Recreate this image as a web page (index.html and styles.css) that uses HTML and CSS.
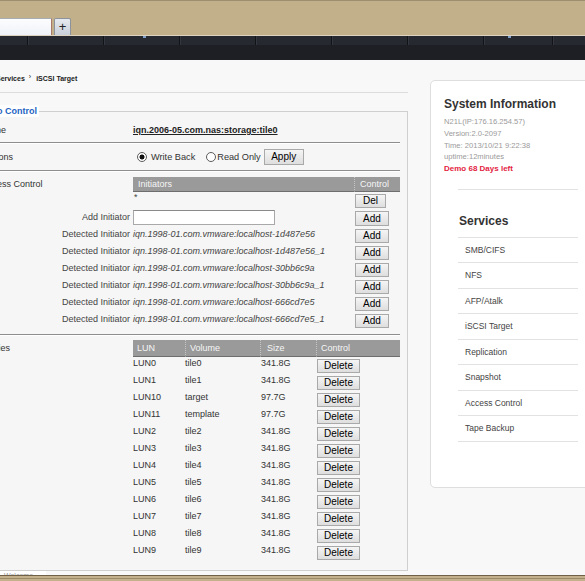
FILE: index.html
```html
<!DOCTYPE html>
<html>
<head>
<meta charset="utf-8">
<title>iSCSI Target</title>
<link rel="stylesheet" href="styles.css">
</head>
<body>
<div class="browser-top">
  <div class="tabstrip">
    <div class="tab"></div>
    <div class="newtab">+</div>
  </div>
  <div class="nav">
    <div class="nav-items">
      <span class="nav-item first"></span>
      <span class="nav-item"></span>
      <span class="nav-item"></span>
      <span class="nav-item"></span>
      <span class="nav-item"></span>
      <span class="nav-item"></span>
      <span class="nav-item"></span>
      <span class="nav-item short"></span>
      <span class="nav-item last"></span>
    </div>
    <div class="nav-bottom"></div>
    <span class="dot dot-a"></span>
    <span class="dot dot-b"></span>
  </div>
</div>

<div class="viewport">
  <div class="page">
    <main class="main">
      <div class="breadcrumb">Services<span class="crumb-sep">&rsaquo;</span>iSCSI Target</div>

      <fieldset class="box">
        <legend class="box-legend">Info Control</legend>

        <div class="field-row name-row">
          <div class="field-label">Name</div>
          <div class="target-name">iqn.2006-05.com.nas:storage:tile0</div>
        </div>
        <div class="sep"></div>

        <div class="field-row opt-row">
          <div class="field-label">Options</div>
          <div class="opt-value">
            <input type="radio" name="cache" class="radio first-radio" checked>
            <span class="radio-label">Write Back</span>
            <input type="radio" name="cache" class="radio second-radio">
            <span class="radio-label second-label">Read Only</span>
            <button class="btn apply-btn">Apply</button>
          </div>
        </div>
        <div class="sep"></div>

        <div class="access">
          <div class="field-label">Access Control</div>
          <div class="th th-init">Initiators</div>
          <div class="th th-ctrl">Control</div>

          <div></div>
          <div class="star">*</div>
          <div><button class="btn del-btn">Del</button></div>

          <div class="sub-label">Add Initiator</div>
          <div><input type="text" class="init-input"></div>
          <div><button class="btn add-btn add-first">Add</button></div>

          <div class="sub-label">Detected Initiator</div>
          <div class="iqn">iqn.1998-01.com.vmware:localhost-1d487e56</div>
          <div><button class="btn add-btn">Add</button></div>

          <div class="sub-label">Detected Initiator</div>
          <div class="iqn">iqn.1998-01.com.vmware:localhost-1d487e56_1</div>
          <div><button class="btn add-btn">Add</button></div>

          <div class="sub-label">Detected Initiator</div>
          <div class="iqn">iqn.1998-01.com.vmware:localhost-30bb6c9a</div>
          <div><button class="btn add-btn">Add</button></div>

          <div class="sub-label">Detected Initiator</div>
          <div class="iqn">iqn.1998-01.com.vmware:localhost-30bb6c9a_1</div>
          <div><button class="btn add-btn">Add</button></div>

          <div class="sub-label">Detected Initiator</div>
          <div class="iqn">iqn.1998-01.com.vmware:localhost-666cd7e5</div>
          <div><button class="btn add-btn">Add</button></div>

          <div class="sub-label">Detected Initiator</div>
          <div class="iqn">iqn.1998-01.com.vmware:localhost-666cd7e5_1</div>
          <div><button class="btn add-btn">Add</button></div>
        </div>
        <div class="sep sep-lun"></div>

        <div class="luns">
          <div class="field-label lun-label">Entries</div>
          <div class="th th-lun">LUN</div>
          <div class="th th-vol">Volume</div>
          <div class="th th-size">Size</div>
          <div class="th th-lctrl">Control</div>

          <div></div><div class="td td-lun">LUN0</div><div class="td td-vol">tile0</div><div class="td td-size">341.8G</div><div><button class="btn delete-btn">Delete</button></div>
          <div></div><div class="td td-lun">LUN1</div><div class="td td-vol">tile1</div><div class="td td-size">341.8G</div><div><button class="btn delete-btn">Delete</button></div>
          <div></div><div class="td td-lun">LUN10</div><div class="td td-vol">target</div><div class="td td-size">97.7G</div><div><button class="btn delete-btn">Delete</button></div>
          <div></div><div class="td td-lun">LUN11</div><div class="td td-vol">template</div><div class="td td-size">97.7G</div><div><button class="btn delete-btn">Delete</button></div>
          <div></div><div class="td td-lun">LUN2</div><div class="td td-vol">tile2</div><div class="td td-size">341.8G</div><div><button class="btn delete-btn">Delete</button></div>
          <div></div><div class="td td-lun">LUN3</div><div class="td td-vol">tile3</div><div class="td td-size">341.8G</div><div><button class="btn delete-btn">Delete</button></div>
          <div></div><div class="td td-lun">LUN4</div><div class="td td-vol">tile4</div><div class="td td-size">341.8G</div><div><button class="btn delete-btn">Delete</button></div>
          <div></div><div class="td td-lun">LUN5</div><div class="td td-vol">tile5</div><div class="td td-size">341.8G</div><div><button class="btn delete-btn">Delete</button></div>
          <div></div><div class="td td-lun">LUN6</div><div class="td td-vol">tile6</div><div class="td td-size">341.8G</div><div><button class="btn delete-btn">Delete</button></div>
          <div></div><div class="td td-lun">LUN7</div><div class="td td-vol">tile7</div><div class="td td-size">341.8G</div><div><button class="btn delete-btn">Delete</button></div>
          <div></div><div class="td td-lun">LUN8</div><div class="td td-vol">tile8</div><div class="td td-size">341.8G</div><div><button class="btn delete-btn">Delete</button></div>
          <div></div><div class="td td-lun">LUN9</div><div class="td td-vol">tile9</div><div class="td td-size">341.8G</div><div><button class="btn delete-btn">Delete</button></div>
        </div>
      </fieldset>
    </main>

    <aside class="panel">
      <div class="sys-title">System Information</div>
      <div class="sys-line">N21L(IP:176.16.254.57)</div>
      <div class="sys-line">Version:2.0-2097</div>
      <div class="sys-line">Time: 2013/10/21 9:22:38</div>
      <div class="sys-line">uptime:12minutes</div>
      <div class="sys-line sys-demo">Demo 68 Days left</div>

      <div class="services">
        <div class="svc-title">Services</div>
        <div class="svc-item">SMB/CIFS</div>
        <div class="svc-item">NFS</div>
        <div class="svc-item">AFP/Atalk</div>
        <div class="svc-item">iSCSI Target</div>
        <div class="svc-item">Replication</div>
        <div class="svc-item">Snapshot</div>
        <div class="svc-item">Access Control</div>
        <div class="svc-item">Tape Backup</div>
      </div>
    </aside>
  </div>
  <div class="status">Welcome</div>
</div>
<div class="browser-bottom"></div>
</body>
</html>
```

FILE: styles.css
```css
html, body {
  margin: 0;
  padding: 0;
}

body {
  width: 585px;
  height: 581px;
  overflow: hidden;
  font-family: "Liberation Sans", Arial, sans-serif;
  font-size: 9px;
  color: #333;
  background: #f8f8f8;
}

/* ---------- browser chrome ---------- */
.browser-top {
  height: 60px;
}

.tabstrip {
  height: 36px;
  box-sizing: border-box;
  background: #c2b08a;
  border-top: 1px solid #9d8e70;
  border-bottom: 1px solid #ddd3c0;
  display: flex;
  align-items: flex-end;
}

.tab {
  width: 52px;
  height: 17px;
  box-sizing: border-box;
  background: linear-gradient(#fdfdfe, #eef2f8);
  border-top: 1px solid #a7adb5;
  border-right: 1px solid #a87868;
}

.newtab {
  width: 17px;
  height: 17px;
  margin-left: 2px;
  box-sizing: border-box;
  background: linear-gradient(#e6eaf0, #c8cfd9);
  border: 1px solid #8d939c;
  border-bottom: none;
  border-radius: 2px 2px 0 0;
  color: #222;
  font-size: 13px;
  line-height: 16px;
  text-align: center;
}

.nav {
  position: relative;
  height: 24px;
}

.nav-items {
  display: flex;
  height: 9px;
  background: #262930;
}

.nav-item {
  flex: none;
  width: 76px;
  box-sizing: border-box;
  border-left: 1px solid #121317;
  box-shadow: inset 1px 0 0 #34373f;
}

.nav-item.first {
  width: 27px;
  border-left: none;
  box-shadow: none;
}

.nav-item.short {
  width: 69px;
}

.nav-item.last {
  flex: 1;
}

.nav-bottom {
  height: 15px;
  background: #1d1f25;
}

.dot {
  position: absolute;
  top: 0;
  width: 3px;
  height: 2px;
  background: #7f9fc9;
}

.dot-a { left: 143px; }
.dot-b { left: 508px; }

.browser-bottom {
  height: 6px;
  background: linear-gradient(to bottom, #6f6046 0, #6f6046 1px, #c4b18b 1px, #c4b18b 3px, #9a8a69 3px, #9a8a69 4px, #c4b18b 4px);
}

/* ---------- viewport ---------- */
.viewport {
  position: relative;
  height: 515px;
  overflow: hidden;
  background: #f8f8f8;
}

.page {
  display: flex;
  align-items: flex-start;
}

.main {
  flex: none;
  width: 438px;
  margin-left: -30px;
}

.breadcrumb {
  padding: 14px 0 8px 26px;
  line-height: 10px;
  font-size: 7px;
  font-weight: bold;
  color: #222;
  border-bottom: 1px solid #dcdcdc;
}

.crumb-sep {
  margin: 0 5px 0 4px;
  font-weight: normal;
  position: relative;
  top: -2px;
}

/* ---------- fieldset ---------- */
.box {
  margin: 12px 0 0;
  padding: 0 7px 9px 11px;
  min-width: 0;
  border: 1px solid #cfcfcf;
  background: #f6f6f6;
}

.box-legend {
  margin-left: 2px;
  padding: 0 2px;
  font-size: 9px;
  font-weight: bold;
  line-height: 12px;
  color: #2463c2;
  background: #fff;
}

.field-row {
  display: grid;
  grid-template-columns: 151px 1fr;
}

.field-label {
  color: #333;
  white-space: nowrap;
}

.name-row {
  padding: 7px 0 6px;
  line-height: 12px;
}

.target-name {
  font-weight: bold;
  text-decoration: underline;
  color: #222;
}

.sep {
  height: 1px;
  background: #8e8e8e;
  box-shadow: 0 1px 0 #ffffff;
}

.opt-row {
  height: 27px;
  align-items: center;
}

.opt-value {
  display: flex;
  align-items: center;
}

.radio {
  appearance: none;
  -webkit-appearance: none;
  margin: 0;
  width: 10px;
  height: 10px;
  box-sizing: border-box;
  border: 1px solid #5c5c5c;
  border-radius: 50%;
  background: #fff;
}

.radio:checked {
  background: radial-gradient(circle, #111 0, #111 2.2px, #fff 2.8px);
}

.first-radio { margin-left: 4px; }
.second-radio { margin-left: 11px; }

.radio-label {
  margin-left: 4px;
  font-size: 9.2px;
  color: #333;
}

.second-label { margin-left: 1px; }

.btn {
  display: block;
  margin: 0;
  padding: 0;
  box-sizing: border-box;
  height: 14px;
  font-family: "Liberation Sans", Arial, sans-serif;
  font-size: 10px;
  line-height: 12px;
  color: #000;
  background: linear-gradient(#f5f5f5, #dedede);
  border: 1px solid #a9a9a9;
  border-radius: 0;
}

.apply-btn {
  margin-left: 3px;
  width: 40px;
  height: 16px;
  line-height: 14px;
}

/* ---------- access control ---------- */
.access {
  margin-top: 6px;
  display: grid;
  grid-template-columns: 151px 221px 46px;
  grid-template-rows: 15px;
  grid-auto-rows: 17px;
}

.access .field-label {
  line-height: 15px;
}

.th {
  box-sizing: border-box;
  background: #9a9a9a;
  color: #f6f6f6;
  line-height: 14px;
  border-bottom: 1px solid #6e6e6e;
  white-space: nowrap;
}

.th-init { padding-left: 5px; }

.th-ctrl {
  padding-left: 5px;
  border-left: 1px dotted #c6c6c6;
}

.star {
  padding-left: 1px;
  line-height: 11px;
  color: #444;
}

.sub-label {
  padding-right: 3px;
  text-align: right;
  line-height: 17px;
  color: #444;
  white-space: nowrap;
}

.iqn {
  line-height: 17px;
  font-style: italic;
  color: #444;
  white-space: nowrap;
}

.init-input {
  display: block;
  margin: 1px 0 0;
  padding: 0;
  width: 142px;
  height: 15px;
  box-sizing: border-box;
  border: 1px solid #a9a9a9;
  border-top-color: #8a8a8a;
  background: #fff;
}

.del-btn {
  margin: 2px 0 0 1px;
  width: 31px;
}

.add-btn {
  margin: 3px 0 0 1px;
  width: 34px;
}

.add-first {
  margin-top: 2px;
  height: 15px;
}

.sep-lun {
  margin-top: 6px;
}

/* ---------- LUN table ---------- */
.luns {
  margin-top: 5px;
  display: grid;
  grid-template-columns: 151px 52px 75px 56px 84px;
  grid-template-rows: 17px;
  grid-auto-rows: 17px;
}

.lun-label {
  line-height: 16px;
}

.luns .th {
  line-height: 16px;
}

.th-lun { padding-left: 4px; }

.th-vol {
  padding-left: 4px;
  border-left: 1px dotted #c6c6c6;
}

.th-size {
  padding-left: 6px;
  border-left: 1px dotted #c6c6c6;
}

.th-lctrl {
  padding-left: 4px;
  border-left: 1px dotted #c6c6c6;
}

.td {
  padding-top: 1px;
  line-height: 11px;
  color: #333;
  white-space: nowrap;
}

.td-lun { padding-left: 0; }
.td-vol { padding-left: 0; }
.td-size { padding-left: 1px; }

.delete-btn {
  margin: 2px 0 0 1px;
  width: 43px;
}

/* ---------- right panel ---------- */
.panel {
  flex: none;
  margin: 20px 0 0 22px;
  width: 170px;
  height: 408px;
  box-sizing: border-box;
  padding: 15px 0 0 13px;
  background: #fff;
  border: 1px solid #dedede;
  border-radius: 5px;
}

.sys-title {
  margin-bottom: 4px;
  font-size: 12px;
  font-weight: bold;
  line-height: 16px;
  color: #333;
}

.sys-line {
  font-size: 7.6px;
  line-height: 11.8px;
  color: #9a9a9a;
  white-space: nowrap;
}

.sys-demo {
  font-size: 8px;
  font-weight: bold;
  color: #e3243f;
}

.services {
  margin: 14px 0 0 14px;
  width: 120px;
  border-top: 1px solid #e2e2e2;
}

.svc-title {
  padding: 23px 0 8px 1px;
  font-size: 12px;
  font-weight: bold;
  line-height: 16px;
  color: #333;
  border-bottom: 1px solid #e2e2e2;
}

.svc-item {
  height: 24.5px;
  padding-left: 7px;
  line-height: 24.5px;
  font-size: 8.5px;
  color: #444;
  border-bottom: 1px solid #e2e2e2;
}

/* ---------- status bubble ---------- */
.status {
  position: absolute;
  left: 0;
  bottom: 0;
  width: 46px;
  height: 4px;
  overflow: hidden;
  background: #fff;
  color: #999;
  font-size: 7px;
  line-height: 9px;
  padding-left: 4px;
  box-sizing: border-box;
}
```
